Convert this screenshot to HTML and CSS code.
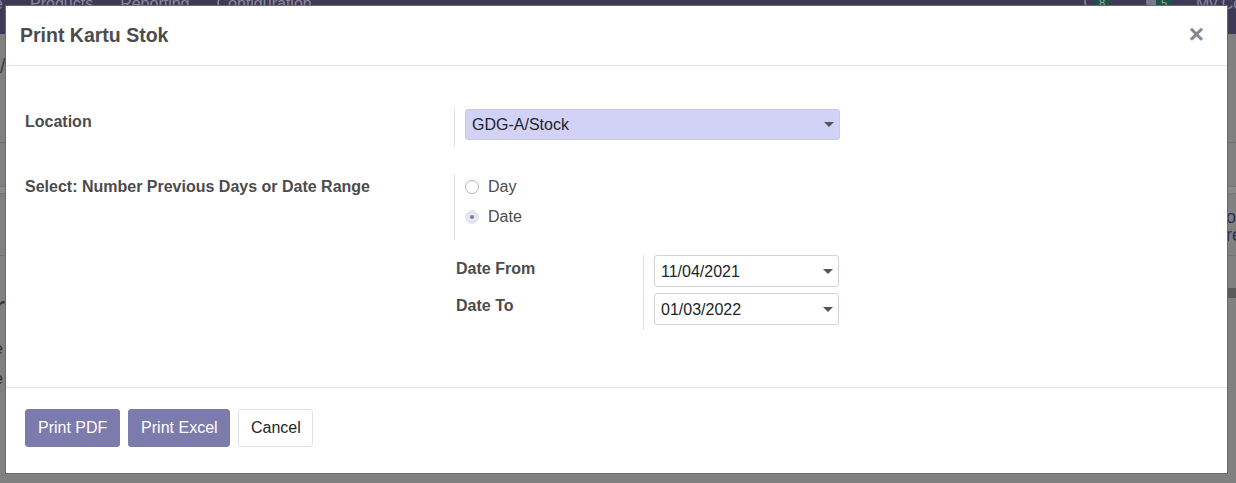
FILE: index.html
```html
<!DOCTYPE html>
<html lang="en">
<head>
<meta charset="utf-8">
<title>Print Kartu Stok</title>
<link rel="stylesheet" href="styles.css">
</head>
<body>
<div class="page">
  <header class="navbar">
    <span class="nav-app">e</span>
    <nav class="nav-menu">
      <span>Products</span>
      <span>Reporting</span>
      <span>Configuration</span>
    </nav>
    <div class="nav-right">
      <span class="nav-icon"><span class="nav-badge">8</span></span>
      <span class="nav-icon nav-icon-round"><span class="nav-badge">5</span></span>
      <span class="nav-company">My Company</span>
    </div>
  </header>
  <div class="bg-content">
    <div class="bg-breadcrumb">/</div>
    <div class="bg-panel"></div>
    <div class="bg-band"></div>
    <div class="bg-row"><span class="bg-side">oo<br>re</span></div>
    <div class="bg-dark"><span class="bg-title">r</span></div>
    <div class="bg-lines"><span>e</span><span>e</span></div>
  </div>
</div>

<div class="modal">
  <div class="modal-header">
    <h4 class="modal-title">Print Kartu Stok</h4>
    <button class="close" type="button" aria-label="Close">×</button>
  </div>
  <div class="modal-body">
    <div class="group-row row-location">
      <div class="cell-label">Location</div>
      <div class="cell-field">
        <div class="select select-required"><span>GDG-A/Stock</span><i class="caret"></i></div>
      </div>
    </div>
    <div class="group-row row-select">
      <div class="cell-label label-select">Select: Number Previous Days or Date Range</div>
      <div class="cell-field field-radio">
        <label class="radio"><span class="radio-dot"></span>Day</label>
        <label class="radio"><span class="radio-dot checked"></span>Date</label>
      </div>
    </div>
    <div class="group-row row-dates">
      <div class="cell-label"></div>
      <div class="subgroup">
        <div class="sub-label">
          <div class="sub-label-a">Date From</div>
          <div class="sub-label-b">Date To</div>
        </div>
        <div class="sub-field">
          <div class="select select-date"><span>11/04/2021</span><i class="caret"></i></div>
          <div class="select select-date"><span>01/03/2022</span><i class="caret"></i></div>
        </div>
      </div>
    </div>
  </div>
  <div class="modal-footer">
    <button class="btn btn-primary" type="button">Print PDF</button>
    <button class="btn btn-primary btn-excel" type="button">Print Excel</button>
    <button class="btn btn-secondary" type="button">Cancel</button>
  </div>
</div>
</body>
</html>
```

FILE: styles.css
```css
* { box-sizing: border-box; }

html, body {
  margin: 0;
  padding: 0;
}

body {
  width: 1236px;
  height: 483px;
  overflow: hidden;
  background: #7f7f7f;
  font-family: "Liberation Sans", Arial, sans-serif;
  font-size: 16px;
  color: #444;
  position: relative;
}

/* ---------- dimmed background page ---------- */
.page {
  width: 1236px;
  height: 483px;
  background: #808080;
}

.navbar {
  height: 34px;
  background: #3e3a55;
  display: flex;
  align-items: flex-start;
  color: #8a87a3;
  font-size: 16px;
  line-height: 16px;
}

.nav-app {
  margin-left: -6px;
  margin-top: -4px;
  width: 36px;
}

.nav-menu {
  display: flex;
  gap: 27px;
  margin-top: -4px;
}

.nav-right {
  margin-left: auto;
  display: flex;
  align-items: flex-start;
}

.nav-icon {
  width: 20px;
  height: 20px;
  margin-top: -8px;
  border: 2px solid #7b7896;
  border-radius: 50%;
  position: relative;
  margin-right: 42px;
}

.nav-icon-round {
  background: #7b7896;
  margin-right: 30px;
}

.nav-badge {
  position: absolute;
  left: 8px;
  top: 2px;
  width: 16px;
  height: 14px;
  background: #1e5249;
  color: #8fb0aa;
  font-size: 11px;
  line-height: 14px;
  text-align: center;
  border-radius: 3px;
}

.nav-company {
  margin-top: -4px;
  margin-right: -60px;
  width: 100px;
}

.bg-content {
  padding-top: 22px;
}

.bg-breadcrumb {
  height: 86px;
  color: #3a3a3a;
  font-size: 20px;
  line-height: 20px;
}

.bg-panel {
  height: 44px;
  border-top: 1px solid #707070;
}

.bg-band {
  height: 8px;
  background: #8a8a8a;
  border-top: 1px solid #767676;
  border-bottom: 1px solid #767676;
}

.bg-row {
  height: 62px;
  display: flex;
  justify-content: flex-end;
  border-bottom: 1px solid #727272;
}

.bg-side {
  margin-top: 14px;
  margin-right: -10px;
  width: 20px;
  color: #2e2e52;
  font-size: 18px;
  line-height: 18px;
}

.bg-dark {
  height: 10px;
  margin-top: 32px;
  background: linear-gradient(to right, #808080 0, #808080 1228px, #5a5a5a 1228px);
}

.bg-title {
  display: block;
  margin-left: -5px;
  color: #333;
  font-size: 30px;
  line-height: 30px;
  padding-top: 4px;
}

.bg-lines {
  display: flex;
  flex-direction: column;
  padding-top: 42px;
  margin-left: -6px;
  color: #333;
  font-size: 16px;
  gap: 12px;
}

/* ---------- modal ---------- */
.modal {
  position: absolute;
  left: 5px;
  top: 5px;
  width: 1223px;
  background: #fff;
  border: 1px solid #6a6a6a;
}

.modal-header {
  height: 60px;
  border-bottom: 1px solid #dee2e6;
  display: flex;
  align-items: center;
  padding: 0 14px;
}

.modal-title {
  margin: 0;
  font-size: 19.5px;
  font-weight: bold;
  color: #4c4c4c;
  line-height: 28px;
  padding-bottom: 2px;
}

.close {
  margin-left: auto;
  margin-right: 9px;
  background: none;
  border: none;
  padding: 0;
  font-family: "Liberation Sans", Arial, sans-serif;
  font-size: 26px;
  font-weight: bold;
  line-height: 26px;
  color: #808890;
  cursor: pointer;
  margin-top: -4px;
}

.modal-body {
  padding: 42px 19px 57px 19px;
}

.group-row {
  display: grid;
  grid-template-columns: 429px 1fr;
}

.row-select {
  margin-top: 27px;
}

.row-dates {
  margin-top: 15px;
}

.cell-label {
  font-weight: bold;
  color: #4c4c4c;
  line-height: 28px;
}

.label-select {
  line-height: 26px;
}

.cell-field {
  border-left: 1px solid #dee2e6;
  padding: 1px 0 7px 10px;
}

.select {
  height: 31px;
  border: 1px solid #ccc;
  border-radius: 3px;
  display: flex;
  align-items: center;
  padding: 0 6px;
  color: #212529;
  position: relative;
}

.select > span {
  padding-top: 1px;
}

.select-required {
  width: 375px;
  background: #d2d2f7;
  border-color: #c8c8ea;
}

.caret {
  margin-left: auto;
  width: 0;
  height: 0;
  border-left: 5px solid transparent;
  border-right: 5px solid transparent;
  border-top: 5px solid #555;
  margin-right: -1px;
}

.field-radio {
  padding: 1px 0 11px 10px;
  display: flex;
  flex-direction: column;
  gap: 6px;
}

.radio {
  display: flex;
  align-items: center;
  height: 24px;
  color: #4c4c4c;
}

.radio-dot {
  width: 14px;
  height: 14px;
  border: 1px solid #b5b5b5;
  border-radius: 50%;
  background: #fff;
  margin-right: 9px;
  position: relative;
}

.radio-dot.checked {
  border-color: #e4e4ec;
  background: #e6e6ee;
}

.radio-dot.checked::after {
  content: "";
  position: absolute;
  left: 4px;
  top: 4px;
  width: 4px;
  height: 4px;
  border-radius: 50%;
  background: #7c7bad;
}

.subgroup {
  display: grid;
  grid-template-columns: 189px 1fr;
}

.sub-label {
  padding-left: 2px;
  font-weight: bold;
  color: #4c4c4c;
}

.sub-label-a {
  line-height: 28px;
  height: 38px;
}

.sub-label-b {
  line-height: 26px;
}

.sub-field {
  border-left: 1px solid #dee2e6;
  padding: 0 0 5px 10px;
  display: flex;
  flex-direction: column;
  gap: 6px;
}

.select-date {
  width: 185px;
  height: 32px;
  background: #fff;
  border-color: #ced4da;
}

.modal-footer {
  border-top: 1px solid #dee2e6;
  padding: 21px 19px 26px 19px;
  display: flex;
  gap: 8px;
}

.btn {
  height: 38px;
  padding: 0 12px;
  border-radius: 3px;
  font-family: "Liberation Sans", Arial, sans-serif;
  font-size: 16px;
  line-height: 36px;
  border: 1px solid transparent;
  cursor: pointer;
}

.btn-excel {
  width: 102px;
  padding: 0;
}

.btn-primary {
  background: #7c7bad;
  border-color: #7c7bad;
  color: #fff;
}

.btn-secondary {
  width: 75px;
  padding: 0;
  background: #fff;
  border-color: #dee2e6;
  color: #212529;
}
```
